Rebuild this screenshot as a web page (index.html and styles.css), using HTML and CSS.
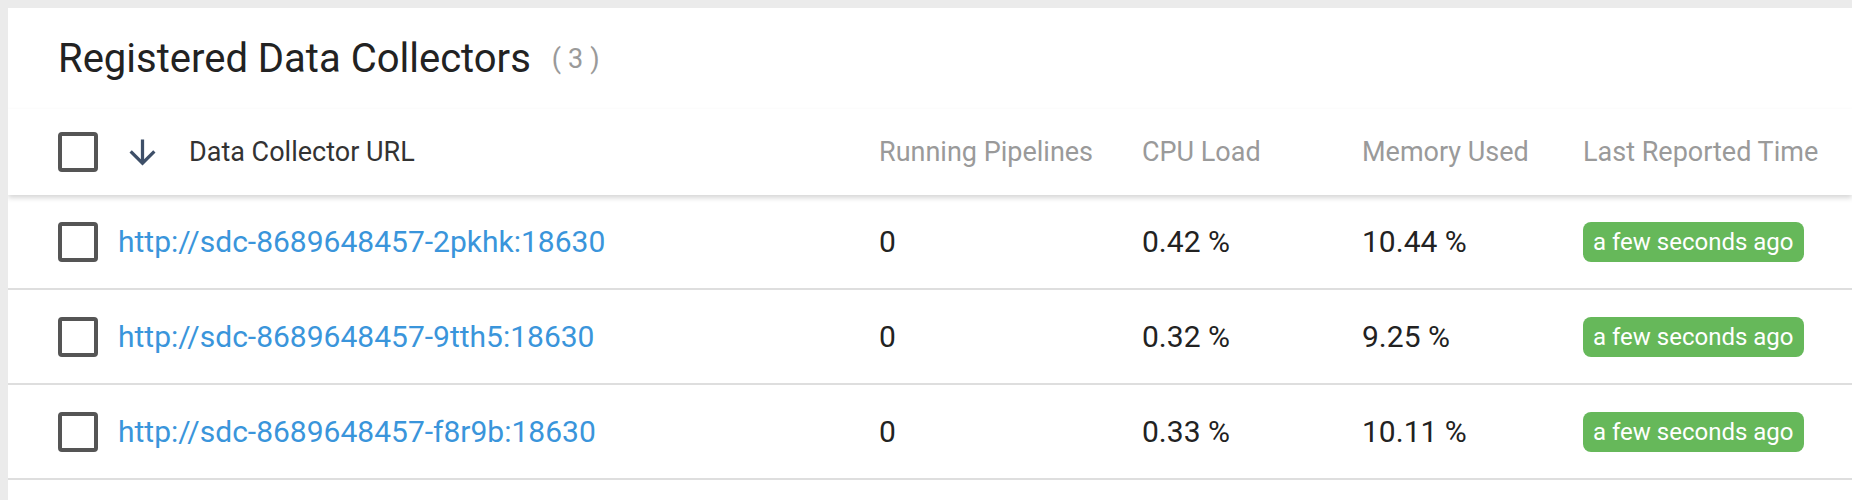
FILE: index.html
```html
<!DOCTYPE html>
<html>
<head>
<meta charset="utf-8">
<title>Registered Data Collectors</title>
<link rel="stylesheet" href="styles.css">
</head>
<body>
<div class="card">
  <div class="card-title">
    <h1>Registered Data Collectors</h1>
    <span class="count">(3)</span>
  </div>
  <div class="table">
    <div class="row head">
      <span class="cb"></span>
      <div class="url-head">
        <svg class="sort" viewBox="0 0 24 24" width="39" height="39"><path d="M20 12l-1.41-1.41L13 16.17V4h-2v12.17l-5.58-5.59L4 12l8 8 8-8z"/></svg>
        <span>Data Collector URL</span>
      </div>
      <div class="muted">Running Pipelines</div>
      <div class="muted">CPU Load</div>
      <div class="muted">Memory Used</div>
      <div class="muted">Last Reported Time</div>
    </div>
    <div class="row">
      <span class="cb"></span>
      <a class="link" href="#">http://sdc-8689648457-2pkhk:18630</a>
      <div>0</div>
      <div>0.42 %</div>
      <div>10.44 %</div>
      <div><span class="badge">a few seconds ago</span></div>
    </div>
    <div class="row">
      <span class="cb"></span>
      <a class="link" href="#">http://sdc-8689648457-9tth5:18630</a>
      <div>0</div>
      <div>0.32 %</div>
      <div>9.25 %</div>
      <div><span class="badge">a few seconds ago</span></div>
    </div>
    <div class="row">
      <span class="cb"></span>
      <a class="link" href="#">http://sdc-8689648457-f8r9b:18630</a>
      <div>0</div>
      <div>0.33 %</div>
      <div>10.11 %</div>
      <div><span class="badge">a few seconds ago</span></div>
    </div>
  </div>
</div>
</body>
</html>
```
FILE: styles.css
```css
html, body {
  height: 100%;
}
body {
  margin: 8px 0 0 8px;
  background: #ebebeb;
  font-family: Roboto, "Liberation Sans", sans-serif;
  color: #222;
  overflow: hidden;
}
.card {
  background: #fff;
  box-shadow: 0 0 4px rgba(0, 0, 0, 0.18);
  height: calc(100vh - 8px);
}
.card-title {
  display: flex;
  align-items: center;
  padding: 27px 0 26px 50px;
}
.card-title h1 {
  margin: 0;
  font-size: 40px;
  font-weight: 400;
  line-height: 48px;
  color: #222;
}
.count {
  margin-left: 21px;
  font-size: 27px;
  line-height: 32px;
  color: #9a9a9a;
  letter-spacing: 7px;
}
.row {
  display: grid;
  grid-template-columns: 40px 741px 243px 200px 201px 1fr;
  column-gap: 20px;
  align-items: center;
  padding-left: 50px;
  height: 93px;
  border-bottom: 2px solid #dedede;
  font-size: 30px;
  color: #222;
}
.row.head {
  position: relative;
  z-index: 1;
  height: 86px;
  border-bottom: none;
  font-size: 27px;
  box-shadow: 0 3px 5px rgba(0, 0, 0, 0.16);
}
.cb {
  display: block;
  width: 40px;
  height: 40px;
  box-sizing: border-box;
  border: 4px solid #555;
  border-radius: 4px;
}
.url-head {
  display: flex;
  align-items: center;
  color: #333;
}
.sort {
  fill: #3e4f68;
  margin-left: 5px;
  margin-right: 27px;
}
.muted {
  color: #9a9a9a;
}
.link {
  color: #3a95db;
  text-decoration: none;
}
.badge {
  display: inline-block;
  background: #66b85a;
  color: #fff;
  font-size: 24px;
  line-height: 40px;
  padding: 0 10px;
  border-radius: 8px;
}
```
